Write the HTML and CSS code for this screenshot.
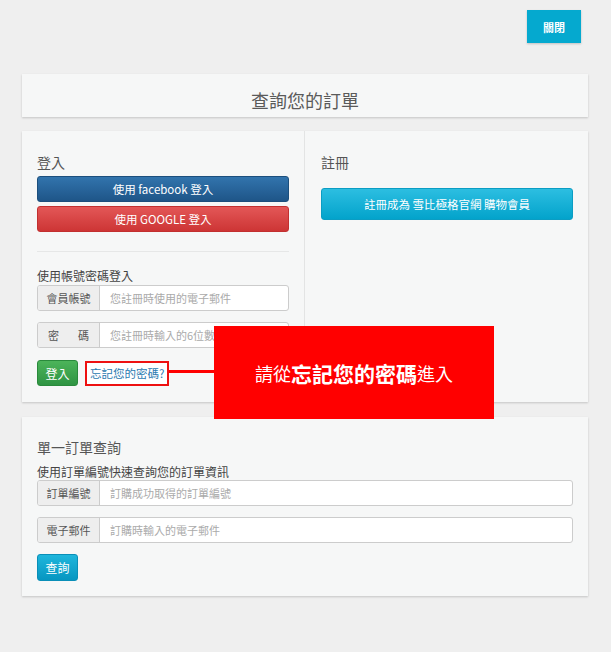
FILE: index.html
```html
<!DOCTYPE html>
<html lang="zh-Hant">
<head>
    <meta charset="UTF-8">
    <meta name="viewport" content="width=device-width, initial-scale=1.0">
    <title>查詢您的訂單</title>
    <link rel="stylesheet" href="styles.css">
</head>
<body>
    <div class="topbar">
        <button class="close-btn">關閉</button>
    </div>

    <div class="card title-card">
        <h1 class="page-title">查詢您的訂單</h1>
    </div>

    <div class="card login-card">
        <div class="col col-left">
            <h3 class="col-title">登入</h3>
            <button class="btn btn-fb">使用 facebook 登入</button>
            <button class="btn btn-google">使用 GOOGLE 登入</button>
            <div class="divider"></div>
            <div class="label">使用帳號密碼登入</div>
            <div class="input-group">
                <span class="addon">會員帳號</span>
                <input type="text" placeholder="您註冊時使用的電子郵件">
            </div>
            <div class="input-group">
                <span class="addon addon-spread"><span>密</span><span>碼</span></span>
                <input type="password" placeholder="您註冊時輸入的6位數以上密碼">
            </div>
            <div class="login-row">
                <button class="btn btn-green">登入</button>
                <a href="#" class="forgot-link">忘記您的密碼?</a>
            </div>
        </div>
        <div class="col col-right">
            <h3 class="col-title">註冊</h3>
            <button class="btn btn-register">註冊成為 雪比極格官網 購物會員</button>
        </div>

        <!-- callout pointing at the forgot password link -->
        <div class="callout">
            <span>請從</span><strong>忘記您的密碼</strong><span>進入</span>
        </div>
    </div>

    <div class="card order-card">
        <h3 class="col-title order-title">單一訂單查詢</h3>
        <div class="label">使用訂單編號快速查詢您的訂單資訊</div>
        <div class="input-group">
            <span class="addon">訂單編號</span>
            <input type="text" placeholder="訂購成功取得的訂單編號">
        </div>
        <div class="input-group">
            <span class="addon">電子郵件</span>
            <input type="text" placeholder="訂購時輸入的電子郵件">
        </div>
        <button class="btn btn-query">查詢</button>
    </div>
</body>
</html>
```

FILE: styles.css
```css
:root {
    --page-bg: #efefef;
    --card-bg: #f6f7f7;
    --text-color: #444;
    --muted: #aaa;
    --cyan: #05a9cf;
}

* {
    margin: 0;
    padding: 0;
    box-sizing: border-box;
}

body {
    font-family: "Noto Sans CJK TC", "Noto Sans", sans-serif;
    background-color: var(--page-bg);
    color: var(--text-color);
    font-size: 12px;
    width: 611px;
    min-height: 652px;
}

button {
    font-family: inherit;
    border: none;
    cursor: pointer;
}

.topbar {
    display: flex;
    justify-content: flex-end;
    padding: 10px 30px 0 0;
}

.close-btn {
    width: 54px;
    height: 33px;
    background-color: var(--cyan);
    color: #fff;
    font-size: 11px;
    font-weight: bold;
    box-shadow: 0 1px 2px rgba(0, 0, 0, 0.2);
}

.card {
    background-color: var(--card-bg);
    width: 566px;
    margin-left: 22px;
    box-shadow: 0 1px 2px rgba(0, 0, 0, 0.18);
}

.title-card {
    margin-top: 31px;
    height: 43px;
    display: flex;
    align-items: center;
    justify-content: center;
}

.page-title {
    font-size: 18px;
    font-weight: normal;
    color: #5a5a5a;
    line-height: 1;
    padding-top: 8px;
}

.login-card {
    margin-top: 14px;
    display: flex;
    position: relative;
    height: 271px;
}

.col-left {
    width: 283px;
    padding: 21px 15px 15px 15px;
    border-right: 1px solid #e3e4e4;
}

.col-right {
    flex: 1;
    padding: 21px 15px 15px 16px;
}

.col-title {
    font-size: 14px;
    font-weight: normal;
    color: #555;
    line-height: 20px;
    height: 20px;
}

.btn {
    display: block;
    width: 100%;
    color: #fff;
    font-size: 12px;
    border-radius: 3px;
}

.btn-fb {
    margin-top: 4px;
    height: 26px;
    font-size: 11.5px;
    background: linear-gradient(#3274ad, #1e5588);
    border: 1px solid #1c4f7d;
}

.btn-google {
    margin-top: 4px;
    height: 26px;
    font-size: 11.5px;
    background: linear-gradient(#e35757, #cd3535);
    border: 1px solid #c23030;
}

.divider {
    margin-top: 19px;
    border-top: 1px solid #e6e7e7;
}

.label {
    margin-top: 14px;
    font-size: 12px;
    line-height: 19px;
    color: #444;
}

.input-group {
    display: flex;
    height: 26px;
    border: 1px solid #ccc;
    border-radius: 3px;
    background-color: #fff;
    overflow: hidden;
}

.input-group + .input-group {
    margin-top: 11px;
}

.addon {
    width: 62px;
    flex-shrink: 0;
    background-color: #eee;
    border-right: 1px solid #ccc;
    color: #555;
    font-size: 11px;
    display: flex;
    align-items: center;
    justify-content: center;
}

.addon-spread {
    justify-content: space-between;
    padding: 0 10px;
}

.input-group input {
    flex: 1;
    min-width: 0;
    border: none;
    outline: none;
    padding-left: 10px;
    font-family: inherit;
    font-size: 11px;
    background: transparent;
}

.input-group input::placeholder {
    color: #aaa;
}

.login-row {
    display: flex;
    align-items: center;
    margin-top: 12px;
}

.btn-green {
    width: 41px;
    height: 26px;
    background: linear-gradient(#4cb45a, #2f9443);
    border: 1px solid #2a8a3c;
    font-size: 12px;
}

.forgot-link {
    margin-left: 7px;
    padding: 2px 3px;
    border: 2px solid #ee1111;
    color: #2a7ab0;
    text-decoration: none;
    font-size: 11.5px;
    line-height: 17px;
    background-color: #fff;
}

.btn-register {
    margin-top: 16px;
    height: 32px;
    background: linear-gradient(#2cbee1, #03a3cb);
    border: 1px solid #0b9dc3;
    font-size: 11.5px;
}

.callout {
    position: absolute;
    left: 192px;
    top: 195px;
    width: 280px;
    height: 93px;
    background-color: #ff0000;
    color: #fff;
    display: flex;
    align-items: center;
    justify-content: center;
    font-size: 18px;
}

.callout strong {
    font-size: 21px;
    font-weight: bold;
}

.callout::before {
    content: "";
    position: absolute;
    left: -45px;
    top: 44px;
    width: 45px;
    height: 3px;
    background-color: #ff0000;
}

.order-card {
    margin-top: 15px;
    padding: 20px 15px 15px 15px;
}

.order-title {
    font-size: 14px;
}

.order-card .label {
    margin-top: 6px;
    line-height: 17px;
}

.btn-query {
    margin-top: 11px;
    width: 41px;
    height: 27px;
    background: linear-gradient(#1fb6dc, #0796c1);
    border: 1px solid #0a8fb8;
}
```
